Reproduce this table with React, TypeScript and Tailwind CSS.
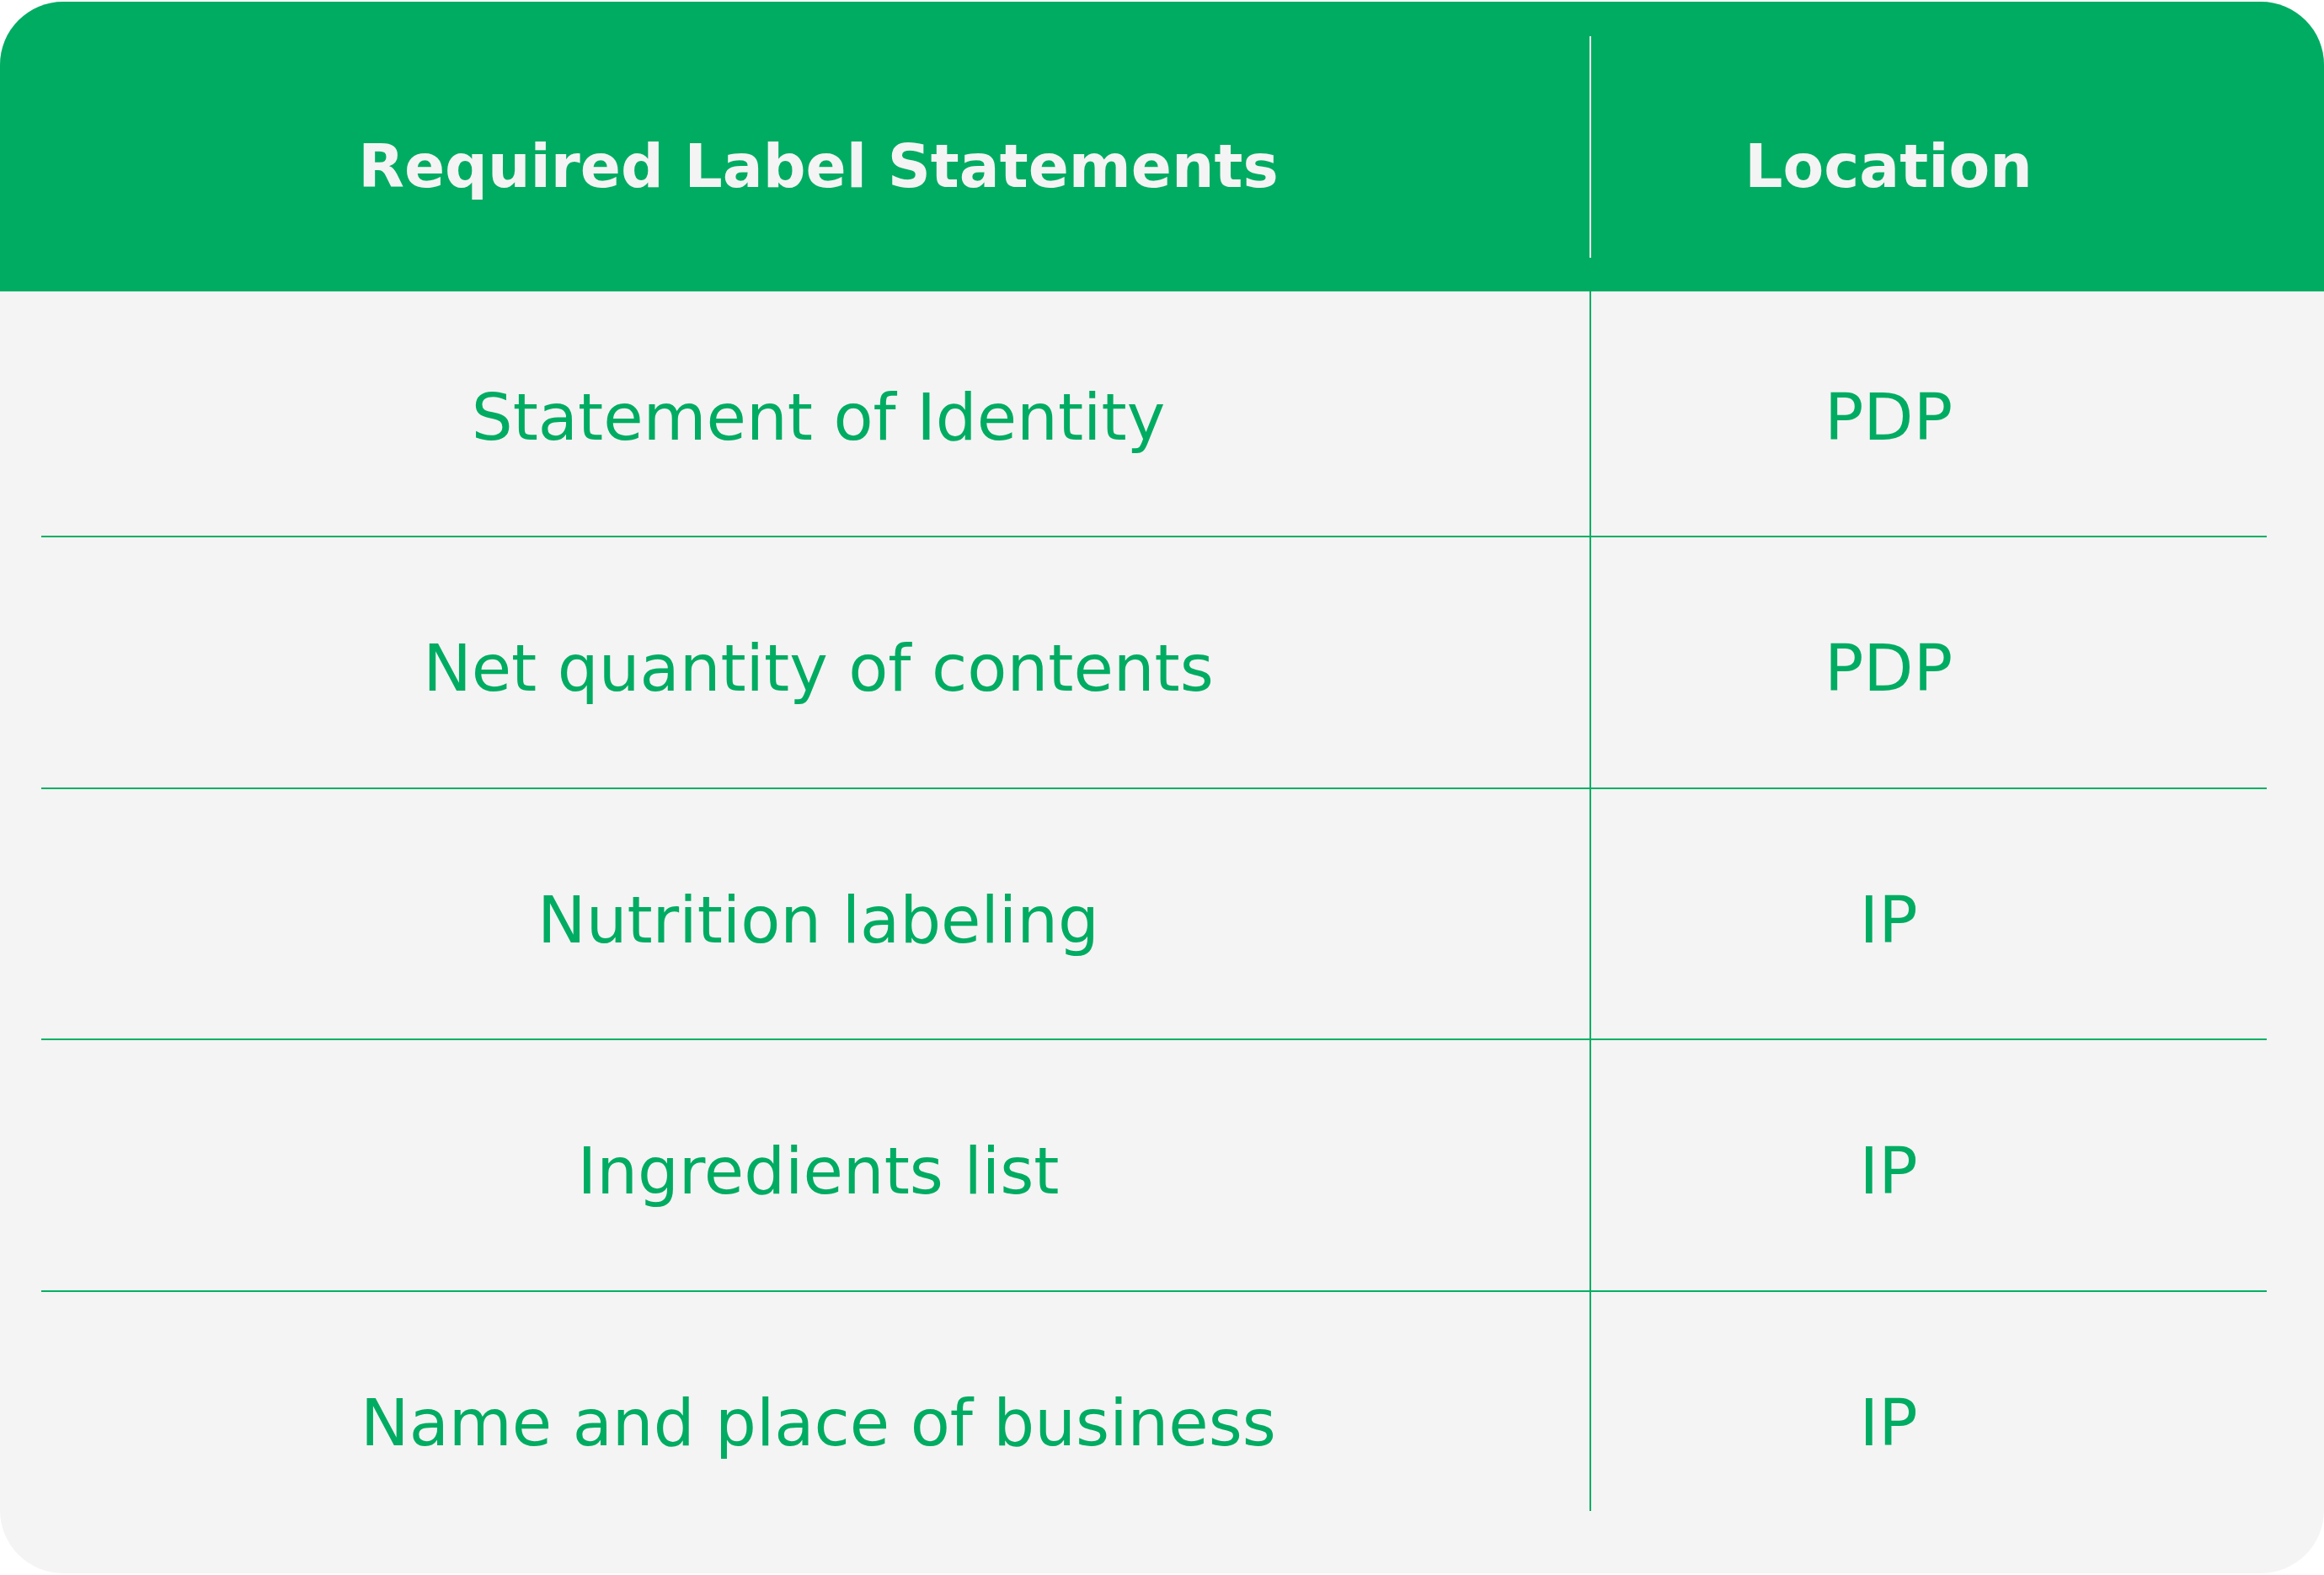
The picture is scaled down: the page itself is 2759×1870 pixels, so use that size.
import React from "react";

const rows: { label: string; loc: string }[] = [
  { label: "Statement of Identity", loc: "PDP" },
  { label: "Net quantity of contents", loc: "PDP" },
  { label: "Nutrition labeling", loc: "IP" },
  { label: "Ingredients list", loc: "IP" },
  { label: "Name and place of business", loc: "IP" },
];

export default function App() {
  return (
    <div className="w-[2759px] h-[1870px] bg-white font-['DejaVu_Sans',sans-serif]">
      <div className="mt-[2px] h-[1866px] w-full rounded-[75px] bg-[#f4f4f4] overflow-hidden flex flex-col">
        {/* Header */}
        <div className="h-[344px] shrink-0 bg-[#00ac62] grid grid-cols-[1887px_2px_1fr]">
          <div className="flex items-center justify-center pl-[56px] pt-[46px] text-[71px] font-bold text-[#f4f4f4] leading-none">
            Required Label Statements
          </div>
          <div className="mt-[41px] h-[263px] bg-[#eaf6ef]" />
          <div className="flex items-center justify-center pr-[164px] pt-[46px] text-[71px] font-bold text-[#f4f4f4] leading-none">
            Location
          </div>
        </div>
        {/* Body */}
        <div className="flex flex-col pl-[49px] pr-[68px]">
          {rows.map((r, i) => {
            const last = i === rows.length - 1;
            const h =
              i === 0
                ? "h-[292px] border-b-2"
                : i === 1
                ? "h-[299px] border-b-2"
                : i === 2
                ? "h-[298px] border-b-2"
                : i === 3
                ? "h-[299px] border-b-2"
                : "h-[297px]";
            const pt = i === 0 ? "pt-[8px]" : "pt-[14px]";
            return (
              <div
                key={r.label}
                className={`${h} border-[#00b064] grid grid-cols-[1838px_2px_1fr]`}
              >
                <div
                  className={`flex items-center justify-center pl-[7px] ${pt} text-[77px] text-[#00ac62] leading-none`}
                >
                  {r.label}
                </div>
                <div
                  className={`bg-[#00ac62] ${last ? "h-[260px]" : "h-full"}`}
                />
                <div
                  className={`flex items-center justify-center pr-[96px] ${pt} text-[77px] text-[#00ac62] leading-none`}
                >
                  {r.loc}
                </div>
              </div>
            );
          })}
        </div>
      </div>
    </div>
  );
}
